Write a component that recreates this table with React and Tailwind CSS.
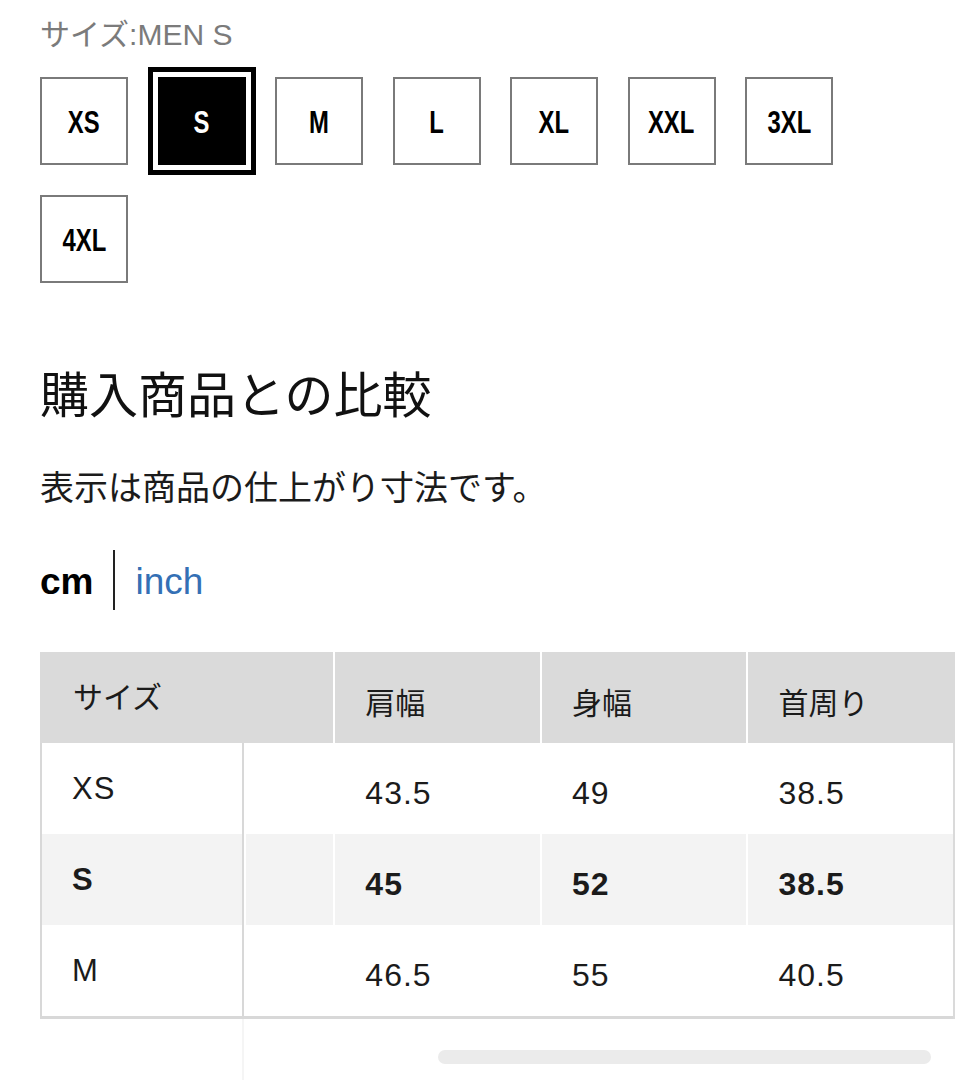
import React from 'react'

const sizes = ['XS', 'S', 'M', 'L', 'XL', 'XXL', '3XL', '4XL']

const rows = [
  { size: 'XS', values: ['43.5', '49', '38.5'] },
  { size: 'S', values: ['45', '52', '38.5'], active: true },
  { size: 'M', values: ['46.5', '55', '40.5'] },
]

const SizeButton = ({ label, selected }) => (
  <div
    className={
      selected
        ? "w-[88px] h-[88px] bg-black text-white flex items-center justify-center outline-[5px] outline-solid outline-black outline-offset-[5px]"
        : "w-[88px] h-[88px] border-2 border-[#7a7a7a] bg-white text-black flex items-center justify-center"
    }
  >
    {/* condensed bold label */}
    <span className="inline-block scale-x-[0.77] font-bold text-[31px] leading-none pt-[3px]">
      {label}
    </span>
  </div>
)

const App = () => {
  return (
    <div className="w-[957px] min-h-[1080px] bg-white overflow-hidden font-['Liberation_Sans','Noto_Sans_CJK_JP',sans-serif] text-[#1b1b1b]">
      <div className="pl-[40px]">
        {/* Selected size label */}
        <div className="pt-[20px] text-[30px] leading-none text-[#7b7b7b]">サイズ:MEN S</div>

        {/* Size chips */}
        <div className="mt-[27px] w-[820px] flex flex-wrap gap-x-[29.5px] gap-y-[30px]">
          {sizes.map((s) => (
            <SizeButton key={s} label={s} selected={s === 'S'} />
          ))}
        </div>

        {/* Heading */}
        <h2 className="mt-[89px] text-[49px] leading-none text-[#111]">購入商品との比較</h2>
        <p className="mt-[50px] text-[34px] leading-none text-[#1b1b1b]">表示は商品の仕上がり寸法です。</p>

        {/* Unit switch */}
        <div className="mt-[45px] h-[60px] flex items-center">
          <span className="text-[37px] leading-none font-bold text-black pt-[3px]">cm</span>
          <span className="mx-[20px] w-[2px] h-[60px] bg-[#222]"></span>
          <span className="text-[37px] leading-none text-[#3470b5] pt-[3px]">inch</span>
        </div>

        {/* Size table */}
        <div className="mt-[42px] w-[917px] overflow-hidden">
          <div className="w-[915px] border-r-2 border-[#dadada]">
            <div className="flex gap-[2px] h-[91px] bg-white">
              <div className="w-[294px] bg-[#dadada] pl-[33px] flex items-center text-[30px] leading-none">サイズ</div>
              {['肩幅', '身幅', '首周り'].map((h) => (
                <div key={h} className="w-[205px] bg-[#dadada] pl-[30px] pt-[12px] flex items-center text-[30px] leading-none">
                  {h}
                </div>
              ))}
            </div>
            {rows.map((r) => (
              <div key={r.size} className="flex gap-[2px] h-[91px]">
                <div
                  className={
                    (r.active ? 'bg-[#f3f3f3] font-bold ' : 'bg-white ') +
                    'w-[204px] border-l-2 border-r-2 border-[#d8d8d8] pl-[30px] flex items-center text-[31px] leading-none tracking-[1px]'
                  }
                >
                  {r.size}
                </div>
                <div className={(r.active ? 'bg-[#f3f3f3]' : 'bg-white') + ' w-[88px]'}></div>
                {r.values.map((v, i) => (
                  <div
                    key={i}
                    className={
                      (r.active ? 'bg-[#f3f3f3] font-bold ' : 'bg-white ') +
                      'w-[205px] pl-[30px] pt-[9px] flex items-center text-[32px] leading-none tracking-[1px]'
                    }
                  >
                    {v}
                  </div>
                ))}
              </div>
            ))}
            <div className="h-[3px] bg-[#d8d8d8]"></div>
          </div>
          {/* scroll area */}
          <div className="flex h-[62px]">
            <div className="w-[204px] h-full border-r-2 border-[#f5f5f5]"></div>
            <div className="ml-[194px] mt-[31px] w-[493px] h-[14px] rounded-full bg-[#ebebeb]"></div>
          </div>
        </div>
      </div>
    </div>
  )
}

export default App
